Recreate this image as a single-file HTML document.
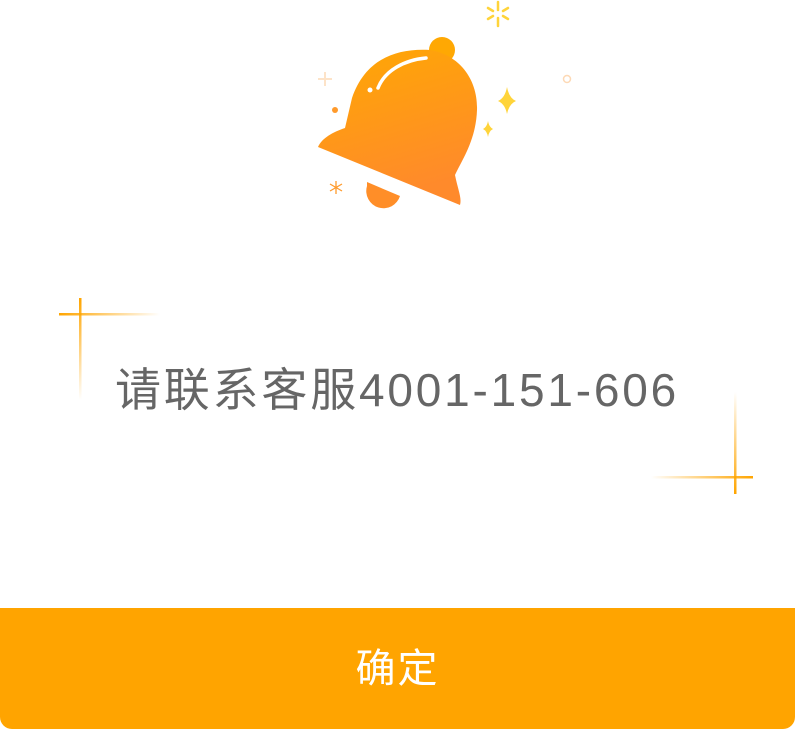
<!DOCTYPE html>
<html><head><meta charset="utf-8"><style>
html,body{margin:0;padding:0;background:#fff;width:795px;height:729px;overflow:hidden;position:relative;font-family:"Liberation Sans","Noto Sans CJK SC",sans-serif}
.txt{position:absolute;left:115px;top:362px;font-size:46px;color:#666;letter-spacing:2.8px;white-space:nowrap;line-height:56px}
.btn{position:absolute;left:0;top:608px;width:795px;height:121px;background:#FFA400;border-radius:0 0 12px 12px;color:#fff;font-size:40px;text-align:center;line-height:122px;letter-spacing:2px}
svg{position:absolute;left:0;top:0}
</style></head><body>
<svg width="795" height="729">
<defs>
<linearGradient id="g" x1="0" y1="0" x2="0.3" y2="1"><stop offset="0" stop-color="#FFA803"/><stop offset="1" stop-color="#FF8A2B"/></linearGradient>
<linearGradient id="h1" x1="0" x2="1"><stop offset="0" stop-color="#FFA500"/><stop offset="1" stop-color="#FFA500" stop-opacity="0"/></linearGradient>
<linearGradient id="h2" x1="1" x2="0"><stop offset="0" stop-color="#FFA500"/><stop offset="1" stop-color="#FFA500" stop-opacity="0"/></linearGradient>
<linearGradient id="v1" x1="0" x2="0" y1="0" y2="1"><stop offset="0" stop-color="#FFA500"/><stop offset="1" stop-color="#FFA500" stop-opacity="0"/></linearGradient>
<linearGradient id="v2" x1="0" x2="0" y1="1" y2="0"><stop offset="0" stop-color="#FFA500"/><stop offset="1" stop-color="#FFA500" stop-opacity="0"/></linearGradient>
</defs>
<circle cx="442" cy="50" r="13" fill="#FFA803"/>
<path d="M367 182 L400 196 A17 17 0 0 1 367 186Z" fill="#FF8E28"/>
<path d="M352 98 C365 60 395 48 430 50 C460 55 478 80 477 110 C476 140 462 160 455 175 C458 190 462 198 460 205 L318 147 C322 138 333 132 345 128 Z" fill="url(#g)"/>
<path d="M378 88 C385 70 405 60 426 58" stroke="#fff" stroke-width="3.5" fill="none" stroke-linecap="round"/>
<circle cx="370" cy="90" r="2.5" fill="#fff"/>
<g stroke="#FFD43A" stroke-width="2.5" stroke-linecap="round"><line x1="498" y1="2" x2="498" y2="10"/><line x1="498" y1="18" x2="498" y2="26"/><line x1="488" y1="8" x2="493" y2="11"/><line x1="503" y1="16" x2="508" y2="19"/><line x1="488" y1="19" x2="493" y2="16"/><line x1="503" y1="11" x2="508" y2="8"/></g>
<path d="M507 87 Q509 98 516 101 Q509 104 507 114 Q505 104 498 101 Q505 98 507 87Z" fill="#FFD43A"/>
<path d="M488 121 Q489 127 493 129 Q489 131 488 137 Q487 131 483 129 Q487 127 488 121Z" fill="#FFD43A"/>
<g stroke="#FDE3C8" stroke-width="2"><line x1="325" y1="72" x2="325" y2="86"/><line x1="318" y1="79" x2="332" y2="79"/></g>
<circle cx="567" cy="79" r="3.5" fill="none" stroke="#FDD9B5" stroke-width="1.5"/>
<circle cx="335" cy="110" r="3" fill="#FF9A2B"/>
<g stroke="#FF9A2B" stroke-width="1.3"><line x1="336" y1="181" x2="336" y2="194"/><line x1="330" y1="184" x2="342" y2="191"/><line x1="330" y1="191" x2="342" y2="184"/></g>
<rect x="79" y="298" width="2.5" height="102" fill="url(#v1)"/>
<rect x="59" y="313" width="101" height="2.5" fill="url(#h1)"/>
<rect x="734" y="392" width="2.5" height="102" fill="url(#v2)"/>
<rect x="651" y="476" width="102" height="2.5" fill="url(#h2)"/>
</svg>
<div class="txt">请联系客服4001-151-606</div>
<div class="btn">确定</div>
</body></html>
